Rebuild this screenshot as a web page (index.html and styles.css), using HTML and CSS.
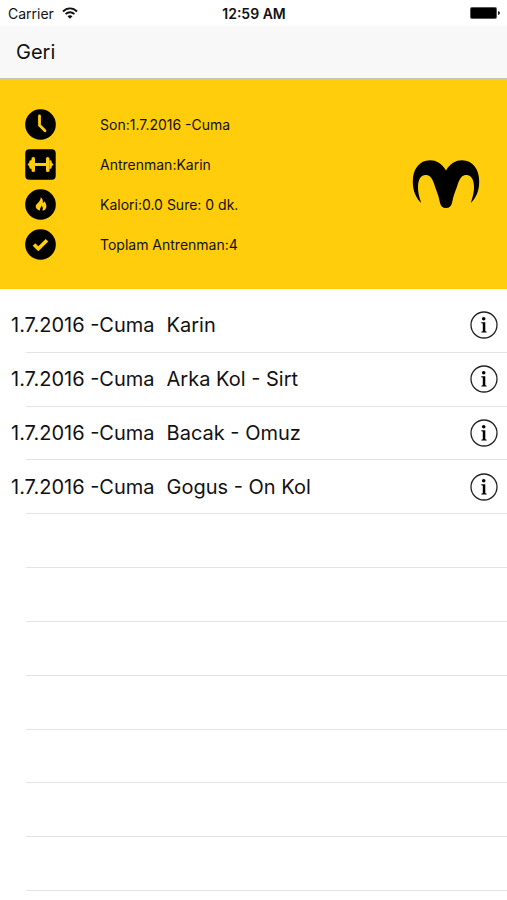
FILE: index.html
```html
<!DOCTYPE html>
<html lang="tr">
<head>
<meta charset="utf-8">
<meta name="viewport" content="width=device-width, initial-scale=1">
<title>Antrenman</title>
<link rel="stylesheet" href="styles.css">
</head>
<body>
<div class="status">
  <div class="carrier">
    <span>Carrier</span>
    <svg width="16" height="12" viewBox="0 0 16 12" fill="none" stroke="#111" stroke-width="1.9"><path d="M1 4.500C5 .3 11 .3 15 4.500M3.600 7.200c2.500-2.600 6.300-2.600 8.800 0"/><path d="M8 11.700 5.500 9.200c1.400-1.400 3.600-1.400 5 0z" fill="#111" stroke="none"/></svg>
  </div>
  <time class="clock">12:59 AM</time>
  <svg class="battery" width="30" height="12" viewBox="0 0 30 12"><rect width="27" height="12" rx="2" fill="#555"/><rect x="1" y="1" width="25" height="10" rx="1" fill="#000"/><path d="M28 4q2 .5 2 2t-2 2z" fill="#222"/></svg>
</div>
<nav class="nav"><button class="back" type="button">Geri</button></nav>
<section class="summary">
  <ul class="stats">
    <li><svg width="31" height="31" viewBox="0 0 31 31"><circle cx="15.500" cy="15.500" r="15.300"/><path d="M14.500 7v9.300l5.500 5.400" fill="none" stroke="#ffcd0c" stroke-width="2.800" stroke-linecap="round" stroke-linejoin="round"/></svg><span>Son:1.7.2016 -Cuma</span></li>
    <li><svg width="31" height="31" viewBox="0 0 31 31"><rect x=".3" y=".3" width="30.400" height="30.400" rx="4"/><path d="M10 14h11v3H10zM6.500 9.500Q6.500 8 8.300 8T10 9.500V21.500Q10 23 8.300 23T6.500 21.500zM21 9.500Q21 8 22.700 8T24.500 9.500V21.500Q24.500 23 22.700 23T21 21.500zM6.700 11v9Q4.200 20 4.200 18v-1.300Q2.700 16.700 2.700 15.500T4.200 14.300V13Q4.200 11 6.700 11zM24.300 11v9q2.500 0 2.500-2v-1.300q1.500 0 1.500-1.200t-1.500-1.200V13q0-2-2.500-2z" fill="#ffcd0c"/></svg><span>Antrenman:Karin</span></li>
    <li><svg width="31" height="31" viewBox="0 0 31 31"><circle cx="15.500" cy="15.500" r="15.300"/><path d="M15.700 8.200c2.200 1.700 2.600 3.500 2 5.500 1 0 1.500-.6 1.700-1.400 2.100 2.500 2.700 5.500 1.200 7.600-.7 1-1.900 1.500-3.200 1.500.9-1.900.4-3.500-1-4.900.1 2.100-1.900 2.500-1.300 4.900-2.600-.3-4.500-1.700-4.400-4.100.1-2.100 1.900-2.700 3.300-4.600.9-1.200 1.700-2.500 1.700-4.500z" fill="#ffcd0c"/></svg><span>Kalori:0.0 Sure: 0 dk.</span></li>
    <li><svg width="31" height="31" viewBox="0 0 31 31"><circle cx="15.500" cy="15.500" r="15.300"/><path d="M9 15.500l4.300 4.200L22 11.200" fill="none" stroke="#ffcd0c" stroke-width="3.700"/></svg><span>Toplam Antrenman:4</span></li>
  </ul>
  <svg class="logo" width="68" height="50" viewBox="0 0 68 50"><path d="M34 11.500C30 4.500 24.500 1.300 18 1.300 7.500 1.300.8 10 .8 22.500c0 9 3 16.500 8.400 21.500C6.800 37 5.800 32 6 27.500 6.300 20 9 16 13.500 16c4 0 6.500 2.500 8.500 8.500 2 6.500 4.500 11.500 5.800 18.500.8 4 2.700 6 6.200 6s5.400-2 6.200-6c1.300-7 3.800-12 5.800-18.500 2-6 4.500-8.500 8.500-8.500 4.500 0 7.200 4 7.500 11.500.2 4.500-.8 9.500-3.200 16.500 5.400-5 8.400-12.500 8.400-21.500C67.200 10 60.500 1.300 50 1.300 43.500 1.300 38 4.500 34 11.500z"/></svg>
</section>
<ul class="list">
  <li class="row"><span class="date">1.7.2016 -Cuma</span><span class="name">Karin</span><button class="info" type="button" aria-label="Karin"><svg width="28" height="28" viewBox="0 0 28 28"><use href="#info"/></svg></button></li>
  <li class="row"><span class="date">1.7.2016 -Cuma</span><span class="name">Arka Kol - Sirt</span><button class="info" type="button" aria-label="Arka Kol - Sirt"><svg width="28" height="28" viewBox="0 0 28 28"><use href="#info"/></svg></button></li>
  <li class="row"><span class="date">1.7.2016 -Cuma</span><span class="name">Bacak - Omuz</span><button class="info" type="button" aria-label="Bacak - Omuz"><svg width="28" height="28" viewBox="0 0 28 28"><use href="#info"/></svg></button></li>
  <li class="row"><span class="date">1.7.2016 -Cuma</span><span class="name">Gogus - On Kol</span><button class="info" type="button" aria-label="Gogus - On Kol"><svg width="28" height="28" viewBox="0 0 28 28"><use href="#info"/></svg></button></li>
  <li class="row"></li>
  <li class="row"></li>
  <li class="row"></li>
  <li class="row"></li>
  <li class="row"></li>
  <li class="row"></li>
  <li class="row"></li>
</ul>
<svg class="symbols" aria-hidden="true"><defs><g id="info"><circle cx="14" cy="14" r="13" fill="none" stroke="#222" stroke-width="1.300"/><circle cx="13.700" cy="7.800" r="1.800"/><path d="M11.300 11.300h4v8.900l1.400.5v.9h-5.400v-.9l1.500-.5v-7.600l-1.500-.4z"/></g></defs></svg>
</body>
</html>
```
FILE: styles.css
```css
* {
  box-sizing: border-box;
}

body {
  margin: 0;
  min-height: 100vh;
  display: flex;
  flex-direction: column;
  background: #fff;
  color: #111;
  font-family: Inter, "Liberation Sans", sans-serif;
}

ul {
  list-style: none;
  margin: 0;
  padding: 0;
}

svg {
  display: block;
  flex: none;
}

button {
  border: 0;
  padding: 0;
  background: none;
  color: inherit;
  font: inherit;
}

.status {
  display: grid;
  grid-template-columns: 1fr auto 1fr;
  align-items: center;
  height: 26px;
  padding: 0 7px 0 8px;
  font-size: 14px;
}

.carrier {
  display: flex;
  align-items: center;
  gap: 8px;
}

.clock {
  font-weight: 600;
}

.battery {
  justify-self: end;
}

.nav {
  display: flex;
  align-items: center;
  height: 53px;
  padding: 0 16px;
  background: #f8f8f8;
  border-bottom: 1px solid #c9c6b8;
}

.back {
  font-size: 20px;
}

.summary {
  display: flex;
  align-items: center;
  justify-content: space-between;
  height: 210px;
  padding: 0 27px 0 25px;
  background: #ffcd0c;
}

.stats li {
  display: flex;
  align-items: center;
  gap: 44px;
  height: 40px;
  font-size: 14px;
}

.list {
  flex: 1;
  display: flex;
  flex-direction: column;
  padding: 10px 0 9px;
}

.row {
  flex: 1 0 50px;
  display: flex;
  align-items: center;
  gap: 12px;
  padding: 0 9px 1px 11px;
  font-size: 20px;
  background: linear-gradient(#e4e4e6, #e4e4e6) 26px 100% / 100% 1px no-repeat;
}

.info {
  margin-left: auto;
}

.symbols {
  position: absolute;
  width: 0;
  height: 0;
}
```
